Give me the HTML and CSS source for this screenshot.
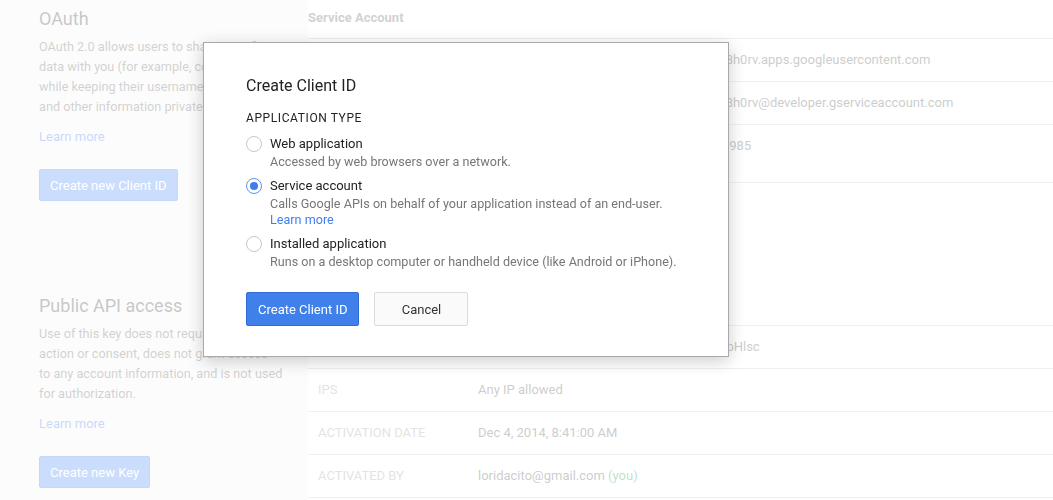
FILE: index.html
```html
<!DOCTYPE html>
<html lang="en">
<head>
<meta charset="utf-8">
<title>Credentials</title>
<link rel="stylesheet" href="styles.css">
</head>
<body>
<div class="page">
  <aside class="side">
    <section class="intro">
      <h2 class="intro-title">OAuth</h2>
      <p class="intro-text">OAuth 2.0 allows users to share specific<br>data with you (for example, contact lists)<br>while keeping their usernames, passwords,<br>and other information private.</p>
      <a class="intro-link" href="#">Learn more</a>
      <button class="btn-primary-muted">Create new Client ID</button>
    </section>
    <section class="intro intro-second">
      <h2 class="intro-title">Public API access</h2>
      <p class="intro-text">Use of this key does not require any user<br>action or consent, does not grant access<br>to any account information, and is not used<br>for authorization.</p>
      <a class="intro-link" href="#">Learn more</a>
      <button class="btn-primary-muted">Create new Key</button>
    </section>
  </aside>

  <main class="main">
    <section class="cred">
      <h3 class="cred-title">Service Account</h3>
      <div class="cred-table">
        <div class="row"><div class="label">Client ID</div><div class="value">418637215904-k4vn2jq7tdl3u1mx9qzs6ba8h0rv.apps.googleusercontent.com</div></div>
        <div class="row"><div class="label">Email address</div><div class="value">418637215904-k4vn2jq7tdl3u1mx9qzs6ba8h0rv@developer.gserviceaccount.com</div></div>
        <div class="row row-tall"><div class="label">Certificate fingerprints</div><div class="value">d3a8f1e0c5b7a92e4f6d1c8b0a3e7f25d9c4985</div></div>
      </div>
      <div class="cred-actions">
        <button class="btn-plain">Generate new JSON key</button>
        <button class="btn-plain">Generate new P12 key</button>
      </div>
    </section>
    <section class="cred">
      <h3 class="cred-title">Key for server applications</h3>
      <div class="cred-table">
        <div class="row"><div class="label">API key</div><div class="value">AIzaSyB3k9dQx7LmN2vR8tYwZ1cFgHjK4upHlsc</div></div>
        <div class="row"><div class="label">IPs</div><div class="value">Any IP allowed</div></div>
        <div class="row"><div class="label">Activation date</div><div class="value">Dec 4, 2014, 8:41:00 AM</div></div>
        <div class="row"><div class="label">Activated by</div><div class="value">loridacito@gmail.com <span class="you">(you)</span></div></div>
      </div>
    </section>
  </main>
</div>

<div class="scrim"></div>

<div class="dialog" role="dialog">
  <h2 class="dialog-title">Create Client ID</h2>
  <div class="dialog-subtitle">APPLICATION TYPE</div>
  <div class="options">
    <div class="option">
      <span class="radio"></span>
      <div class="option-body">
        <div class="option-label">Web application</div>
        <div class="option-desc">Accessed by web browsers over a network.</div>
      </div>
    </div>
    <div class="option">
      <span class="radio radio-checked"></span>
      <div class="option-body">
        <div class="option-label">Service account</div>
        <div class="option-desc">Calls Google APIs on behalf of your application instead of an end-user.</div>
        <a class="option-link" href="#">Learn more</a>
      </div>
    </div>
    <div class="option">
      <span class="radio"></span>
      <div class="option-body">
        <div class="option-label">Installed application</div>
        <div class="option-desc">Runs on a desktop computer or handheld device (like Android or iPhone).</div>
      </div>
    </div>
  </div>
  <div class="dialog-buttons">
    <button class="btn-blue">Create Client ID</button>
    <button class="btn-cancel">Cancel</button>
  </div>
</div>
</body>
</html>
```

FILE: styles.css
```css
* { box-sizing: border-box; }

html, body {
  margin: 0;
  padding: 0;
  height: 100%;
  overflow: hidden;
}

body {
  font-family: Roboto, "Liberation Sans", Arial, sans-serif;
  font-size: 13px;
  color: #444;
  background: #f6f6f6;
}

button {
  font-family: inherit;
  font-size: 13px;
  cursor: pointer;
}

.page {
  display: flex;
  min-height: 100%;
}

/* Left column */
.side {
  width: 308px;
  flex: none;
  padding-left: 39px;
}

.intro {
  display: flex;
  flex-direction: column;
  align-items: flex-start;
  padding-top: 7px;
}

.intro-second {
  padding-top: 93px;
}

.intro-title {
  margin: 0;
  font-size: 18px;
  font-weight: 400;
  line-height: 24px;
  color: #444;
}

.intro-text {
  margin: 6px 0 0;
  font-size: 12.7px;
  line-height: 20px;
  color: #666;
  white-space: nowrap;
}

.intro-link {
  margin-top: 10px;
  line-height: 20px;
  color: #427fed;
  text-decoration: none;
}

.btn-primary-muted {
  margin-top: 22px;
  height: 32px;
  padding: 0 10px;
  border: 1px solid #3d7ee8;
  border-radius: 2px;
  background: #4d8cf5;
  color: #fff;
}

/* Right column */
.main {
  flex: 1;
  background: #fff;
}

.cred-title {
  margin: 0;
  padding: 8px 0 0;
  height: 38px;
  line-height: 20px;
  font-size: 13px;
  font-weight: 700;
  color: #666;
}

.cred-table {
  border-top: 1px solid #cdcdcd;
}

.row {
  display: grid;
  grid-template-columns: 160px 1fr;
  height: 43px;
  align-items: center;
  border-bottom: 1px solid #cdcdcd;
  background: #fff;
}

.row-tall {
  height: 58px;
  align-items: start;
  padding-top: 11px;
}

.label {
  padding: 0 10px;
  line-height: 20px;
  text-transform: uppercase;
  color: #a0a0a0;
  white-space: nowrap;
}

.value {
  padding: 0 10px;
  line-height: 20px;
  color: #555;
  white-space: nowrap;
}

.you {
  color: #1e9e3e;
}

.cred-actions {
  display: flex;
  gap: 10px;
  height: 104px;
  padding: 20px 10px 0;
}

.btn-plain {
  height: 30px;
  padding: 0 10px;
  border: 1px solid #d9d9d9;
  border-radius: 2px;
  background: #f8f8f8;
  color: #444;
}

/* Scrim */
.scrim {
  position: fixed;
  inset: 0;
  background: rgba(255, 255, 255, 0.7);
}

/* Dialog */
.dialog {
  position: absolute;
  left: 203px;
  top: 42px;
  width: 526px;
  height: 315px;
  padding: 33px 42px 0;
  background: #fff;
  border: 1px solid #a9a9a9;
  box-shadow: 0 4px 16px rgba(0, 0, 0, 0.2);
  color: #222;
}

.dialog-title {
  margin: 0;
  font-size: 16px;
  font-weight: 400;
  line-height: 20px;
  color: #222;
}

.dialog-subtitle {
  margin-top: 14px;
  font-size: 12px;
  line-height: 16px;
  letter-spacing: 0.6px;
  color: #222;
}

.options {
  display: flex;
  flex-direction: column;
  gap: 6px;
  margin-top: 8px;
}

.option {
  display: flex;
  align-items: flex-start;
  gap: 8px;
}

.radio {
  flex: none;
  width: 16px;
  height: 16px;
  margin-top: 2px;
  border: 1px solid #c8c8c8;
  border-radius: 50%;
  background: #fff;
  display: flex;
  align-items: center;
  justify-content: center;
}

.radio-checked {
  border-color: #5a93f0;
}

.radio-checked::after {
  content: "";
  width: 8px;
  height: 8px;
  border-radius: 50%;
  background: #3f7ee8;
}

.option-body {
  display: flex;
  flex-direction: column;
  align-items: flex-start;
}

.option-label {
  line-height: 20px;
  color: #222;
}

.option-desc {
  font-size: 12.6px;
  line-height: 16px;
  color: #777;
  white-space: nowrap;
}

.option-link {
  font-size: 12.6px;
  line-height: 16px;
  color: #427fed;
  text-decoration: none;
}

.dialog-buttons {
  display: flex;
  gap: 15px;
  margin-top: 22px;
}

.btn-blue {
  height: 34px;
  padding: 0 11px;
  border: 1px solid #2f6cd6;
  border-radius: 2px;
  background: #3f80ea;
  color: #fff;
}

.btn-cancel {
  height: 34px;
  width: 94px;
  padding: 0;
  border: 1px solid #dcdcdc;
  border-radius: 2px;
  background: #fafafa;
  color: #333;
}
```
